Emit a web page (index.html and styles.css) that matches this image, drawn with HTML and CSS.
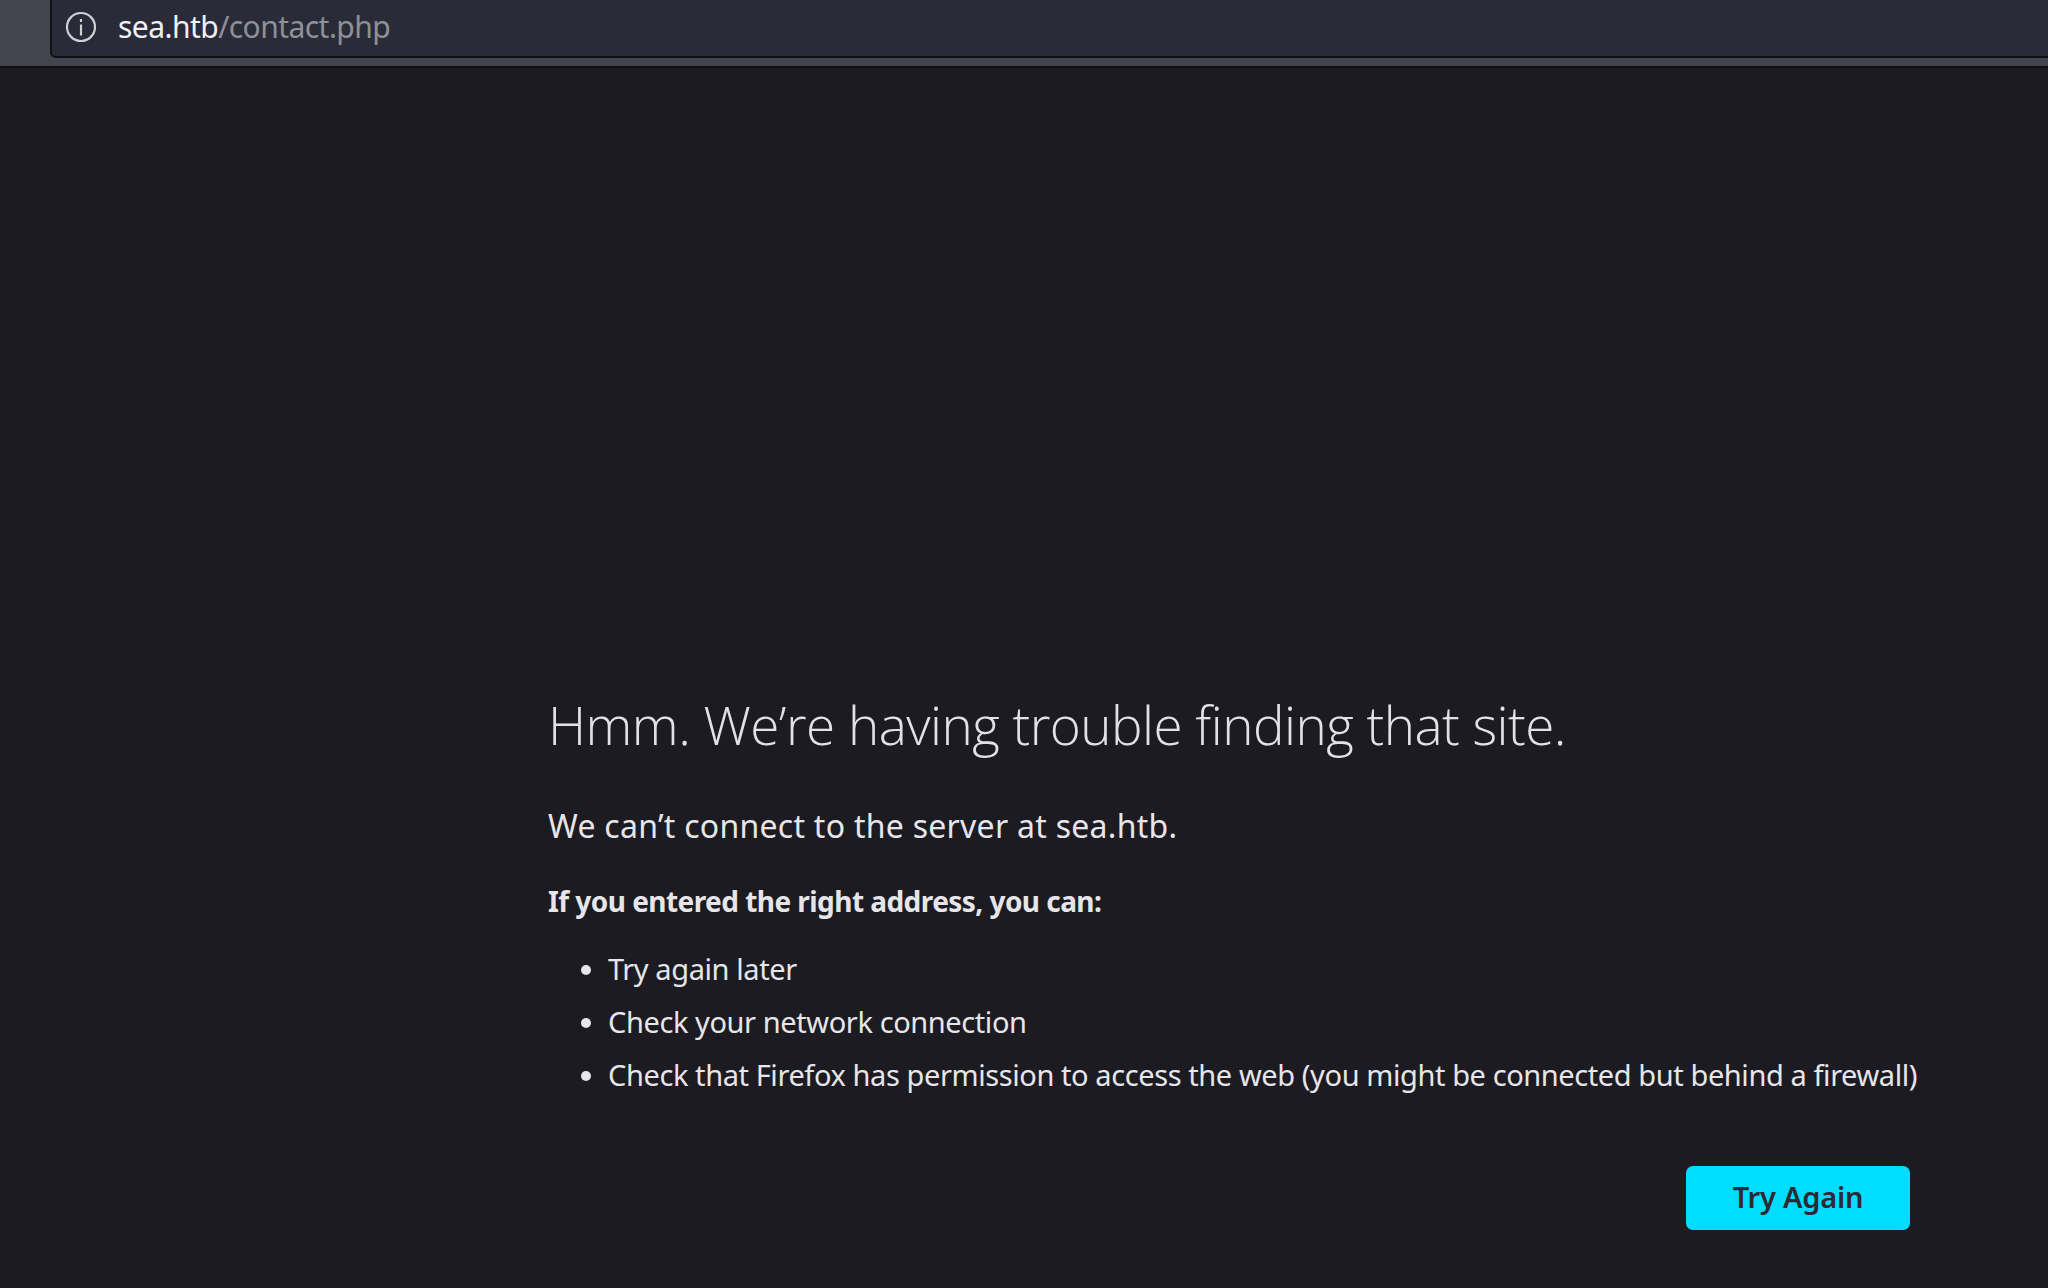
FILE: index.html
```html
<!DOCTYPE html>
<html lang="en">
<head>
<meta charset="utf-8">
<title>Server Not Found</title>
<link rel="stylesheet" href="styles.css">
</head>
<body>
<header class="toolbar">
  <div class="urlbar">
    <svg class="info" width="32" height="32" viewBox="0 0 32 32" aria-hidden="true">
      <circle cx="16" cy="16" r="14" fill="none" stroke="#d0d0d6" stroke-width="2.2"/>
      <rect x="14.9" y="13.5" width="2.2" height="11" fill="#d0d0d6"/>
      <rect x="14.9" y="8" width="2.2" height="3" fill="#d0d0d6"/>
    </svg>
    <span class="url"><span class="host">sea.htb</span>/contact.php</span>
  </div>
</header>
<main class="error">
  <h1 class="title">Hmm. We’re having trouble finding that site.</h1>
  <p class="lead">We can’t connect to the server at sea.htb.</p>
  <p class="advice">If you entered the right address, you can:</p>
  <ul class="tips">
    <li>Try again later</li>
    <li>Check your network connection</li>
    <li>Check that Firefox has permission to access the web (you might be connected but behind a firewall)</li>
  </ul>
  <div class="actions"><button class="retry">Try Again</button></div>
</main>
</body>
</html>
```
FILE: styles.css
```css
* { box-sizing: border-box; }
html, body { margin: 0; height: 100%; }
body {
  background: #1c1b22;
  color: #fbfbfe;
  font-family: "Noto Sans", sans-serif;
  overflow: hidden;
}
.toolbar {
  height: 68px;
  background: #42454e;
  border-bottom: 2px solid #0f0f14;
  padding-left: 50px;
}
.urlbar {
  height: 58px;
  background: #2a2b38;
  border: solid #0f0f14;
  border-width: 0 0 2px 2px;
  border-bottom-left-radius: 6px;
  display: flex;
  align-items: center;
  gap: 21px;
  padding: 0 0 3px 13px;
}
.info { flex: none; }
.url { font-size: 30px; color: #8f9097; letter-spacing: -0.55px; }
.host { color: #f0f0f4; }
.error { padding: 0 0 0 548px; }
.title {
  margin: 0;
  padding-top: 621px;
  font-size: 53px;
  line-height: 72px;
  font-weight: 300;
  font-family: "Open Sans", sans-serif;
  letter-spacing: -0.53px;
  color: #e2e2e6;
  white-space: nowrap;
}
.lead { margin: 43px 0 0; font-size: 32px; line-height: 44px; letter-spacing: 0.27px; color: #e6e6ea; }
.advice { margin: 33px 0 0; font-size: 28px; line-height: 40px; font-weight: 700; letter-spacing: -0.55px; color: #e6e6ea; }
.tips { margin: 21px 0 0; padding-left: 60px; font-size: 29px; letter-spacing: -0.41px; color: #e6e6ea; white-space: nowrap; }
.tips li { line-height: 53px; }
.actions { display: flex; justify-content: flex-end; padding: 65px 138px 0 0; }
.retry {
  width: 224px;
  height: 64px;
  border: 0;
  border-radius: 7px;
  padding: 0 0 3px;
  background: #00ddff;
  color: #2b2a33;
  font: 600 29px "Noto Sans", sans-serif;
  letter-spacing: -0.2px;
}
```
